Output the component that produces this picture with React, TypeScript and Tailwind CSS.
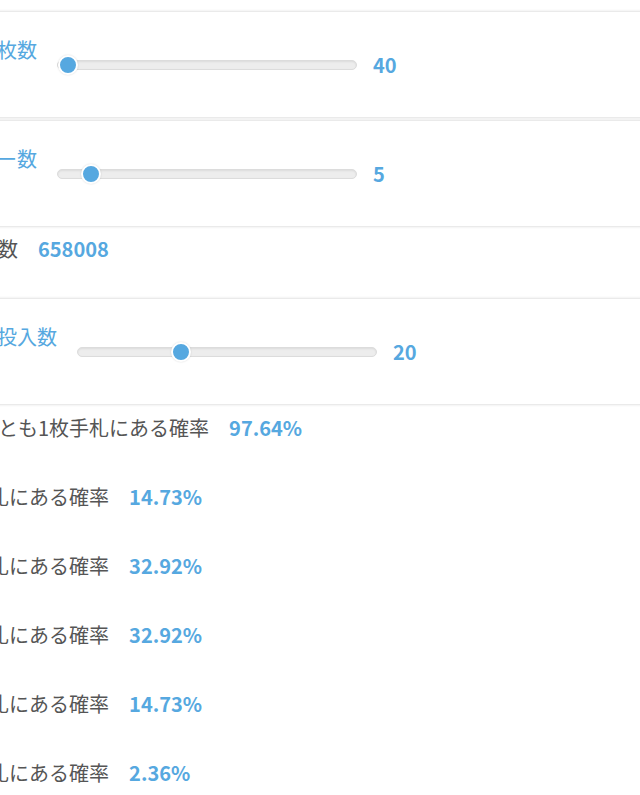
import { useState } from 'react';

const font = { fontFamily: '"Noto Sans CJK JP", "Noto Sans", sans-serif' };

// 組み合わせ数 nCr
function comb(n: number, r: number) {
  if (r < 0 || r > n) return 0;
  let res = 1;
  for (let i = 1; i <= r; i++) res = (res * (n - r + i)) / i;
  return Math.round(res);
}

interface SliderRowProps {
  label: string;
  value: number;
  min: number;
  max: number;
  onChange: (v: number) => void;
}

function SliderRow({ label, value, min, max, onChange }: SliderRowProps) {
  const pct = (value - min) / (max - min);

  const handleClick = (e: React.MouseEvent<HTMLDivElement>) => {
    const rect = e.currentTarget.getBoundingClientRect();
    const p = Math.min(1, Math.max(0, (e.clientX - rect.left - 10) / (rect.width - 20)));
    onChange(Math.round(min + p * (max - min)));
  };

  return (
    <div className="bg-white shadow-[0_0_3px_rgba(0,0,0,0.22)] mb-1 px-6 pt-[24px] pb-[38px]">
      <div className="flex items-start">
        <div className="text-[20px] leading-[28px] text-[#56a8e0] whitespace-nowrap">{label}</div>
        <div className="ml-5 mt-[15px] h-[28px] flex items-center">
          <div
            onClick={handleClick}
            className="relative w-[300px] h-[10px] rounded-full bg-[#ededed] border border-[#dcdcdc] shadow-[inset_0_1px_2px_rgba(0,0,0,0.08)] cursor-pointer"
          >
            <div
              className="absolute top-1/2 w-[20px] h-[20px] -mt-[10px] -ml-[10px] rounded-full bg-[#56a8e0] border-2 border-white shadow-[0_0_2px_rgba(0,0,0,0.15)]"
              style={{ left: `${10 + pct * 280}px` }}
            />
          </div>
        </div>
        <div className="ml-4 mt-[15px] text-[20px] leading-[28px] font-bold text-[#56a8e0]">{value}</div>
      </div>
    </div>
  );
}

export default function App() {
  const [deck, setDeck] = useState(40);
  const [draw, setDraw] = useState(5);
  const [copies, setCopies] = useState(20);

  const total = comb(deck, draw);
  const probs = Array.from({ length: draw + 1 }, (_, k) => (comb(copies, k) * comb(deck - copies, draw - k)) / total);
  const atLeastOne = 1 - probs[0];
  const fmt = (p: number) => `${(p * 100).toFixed(2)}%`;

  return (
    <div className="w-[640px] h-[795px] overflow-hidden bg-white" style={font}>
      <div className="-ml-[87px] w-[780px] pt-[12px]">
        <SliderRow label="デッキ枚数" value={deck} min={40} max={60} onChange={setDeck} />
        <SliderRow label="初ドロー数" value={draw} min={0} max={60} onChange={setDraw} />

        {/* Combinations */}
        <div className="pl-[25px] pt-[5px] pb-[36px] flex text-[20px] leading-[28px]">
          <span className="text-[#555]">組合せ数</span>
          <span className="ml-5 font-bold text-[#56a8e0]">{total}</span>
        </div>

        <SliderRow label="カード投入数" value={copies} min={0} max={60} onChange={setCopies} />

        {/* Results */}
        <div className="pt-[6px]">
          <div className="pl-[25px] h-[69px] flex text-[20px] leading-[28px]">
            <span className="text-[#555]">少なくとも1枚手札にある確率</span>
            <span className="ml-5 font-bold text-[#56a8e0]">{fmt(atLeastOne)}</span>
          </div>
          {probs.slice(1).map((p, i) => (
            <div key={i} className="pl-[25px] h-[69px] flex text-[20px] leading-[28px]">
              <span className="text-[#555]">{i + 1}枚手札にある確率</span>
              <span className="ml-5 font-bold text-[#56a8e0]">{fmt(p)}</span>
            </div>
          ))}
        </div>
      </div>
    </div>
  );
}
